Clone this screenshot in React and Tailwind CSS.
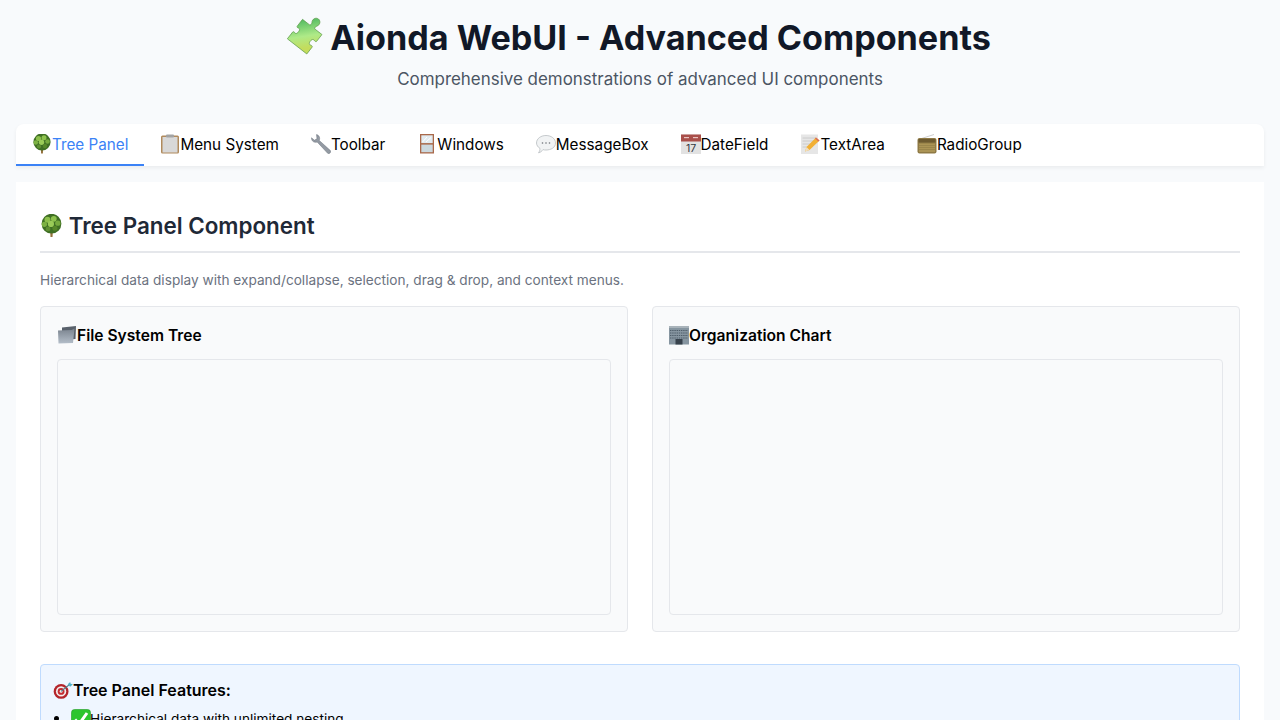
import React from 'react';

// Emoji drawings (no colour emoji font on the box)
const Puzzle = ({ className }) => (
  <svg className={className} viewBox="18 15 120 120">
    <defs>
      <linearGradient id="pz" x1="0.9" y1="0.2" x2="0.1" y2="0.8">
        <stop offset="0" stopColor="#4db85f" />
        <stop offset="0.6" stopColor="#aeea88" />
        <stop offset="1" stopColor="#c4dc5c" />
      </linearGradient>
    </defs>
    <path
      transform="translate(74 74) rotate(-52) scale(1.12)"
      d="M-33 -33 L-10 -33 C-7 -33 -7 -29 -8 -27 C-12 -19 12 -19 8 -27 C7 -29 7 -33 10 -33 L33 -33 L33 -10 C33 -6 38 -6 42 -8 C50 -14 60 -8 60 0 C60 8 50 14 42 8 C38 6 33 6 33 10 L33 33 L10 33 C7 33 7 29 8 26 C12 17 -12 17 -8 26 C-7 29 -7 33 -10 33 L-33 33 Z"
      fill="url(#pz)"
      stroke="#5d9a48"
      strokeWidth="1.8"
      strokeLinejoin="round"
    />
  </svg>
);

const Tree = ({ className }) => (
  <svg className={className} viewBox="0 0 20 20">
    <path d="M8.8 13 L11.2 13 L10.9 19.5 L9.1 19.5 Z" fill="#94713c" />
    <circle cx="10" cy="8" r="8.6" fill="#3f6f24" />
    <circle cx="6.5" cy="4.5" r="2.6" fill="#8dc04c" />
    <circle cx="12" cy="3.8" r="2.5" fill="#8ec24e" />
    <circle cx="3.8" cy="8.5" r="2.3" fill="#7db243" />
    <circle cx="9.5" cy="8.2" r="2.7" fill="#9acb58" />
    <circle cx="15.5" cy="7.5" r="2.3" fill="#76aa3e" />
    <circle cx="7" cy="12.5" r="2.1" fill="#5f9032" />
    <circle cx="13" cy="12" r="2.2" fill="#568729" />
  </svg>
);

const Clipboard = ({ className }) => (
  <svg className={className} viewBox="0 0 20 20">
    <rect x="1" y="1.5" width="18" height="18" rx="1.5" fill="#b08a5c" />
    <rect x="2.5" y="3" width="15" height="15.5" fill="#d8d8d8" />
    <rect x="6" y="0.5" width="8" height="3" rx="1" fill="#a3a3a3" />
  </svg>
);

const Wrench = ({ className }) => (
  <svg className={className} viewBox="0 0 20 20">
    <path
      d="M5.5 0.6 C8.3 1 9.3 4.3 8.2 6.4 L19.4 16.6 C20.4 18.2 18.4 20.4 16.7 19.3 L6.2 8 C3.6 9 0.4 7.4 0.5 3.8 L3.4 6.2 L6 4.8 Z"
      fill="#939aa3"
      stroke="#69717a"
      strokeWidth="0.5"
    />
  </svg>
);

const WindowPane = ({ className }) => (
  <svg className={className} viewBox="0 0 20 20">
    <rect x="3" y="0" width="14" height="19.5" fill="#a9694a" />
    <rect x="4.3" y="1.3" width="11.4" height="7.8" fill="#e2ebf0" />
    <rect x="4.3" y="10.6" width="11.4" height="7.6" fill="#cbd8de" />
    <path d="M5.5 8 L10 3 M9 8 L14 3.5" stroke="#ffffff" strokeWidth="1" />
  </svg>
);

const Speech = ({ className }) => (
  <svg className={className} viewBox="0 0 20 20">
    <path
      d="M10 1.5 C15 1.5 19.5 4.5 19.5 9 C19.5 13.5 15 16 10 16 C9 16 8 16 7 15.6 C6 17 4.5 18.5 2.5 18.8 C3.5 17.5 4 16 4 14.5 C1.8 13 0.5 11 0.5 9 C0.5 4.5 5 1.5 10 1.5 Z"
      fill="#f1f3f4"
      stroke="#b8bcc0"
      strokeWidth="0.8"
    />
    <circle cx="6.5" cy="9" r="0.8" fill="#6d7278" />
    <circle cx="10" cy="9" r="0.8" fill="#6d7278" />
    <circle cx="13.5" cy="9" r="0.8" fill="#6d7278" />
  </svg>
);

const Calendar = ({ className }) => (
  <svg className={className} viewBox="0 0 20 20">
    <rect x="0" y="0.5" width="20" height="19.5" fill="#e2e2e2" />
    <rect x="0" y="0.5" width="20" height="7" fill="#a94f4a" />
    <rect x="3" y="3" width="5" height="1.2" fill="#e9c4c1" />
    <rect x="12" y="3" width="5" height="1.2" fill="#e9c4c1" />
    <text x="10" y="18.2" textAnchor="middle" fontSize="10.5" fontFamily="Inter, sans-serif" fill="#33393f">
      17
    </text>
  </svg>
);

const Memo = ({ className }) => (
  <svg className={className} viewBox="0 0 20 20">
    <rect x="1" y="0.5" width="17" height="19.5" fill="#e6e6e6" />
    <path d="M2.5 4 H16 M2.5 7 H16 M2.5 10 H12 M2.5 13 H8" stroke="#c4c4c4" strokeWidth="0.8" />
    <path d="M5 17.5 L6.5 13 L16 3.5 L19.5 6.5 L9.5 16 Z" fill="#f2b035" />
    <path d="M15 4.5 L16 3.5 L19.5 6.5 L18.5 7.5 Z" fill="#d96a5f" />
    <path d="M5 17.5 L6.5 13 L9.5 16 Z" fill="#f1dfc0" />
  </svg>
);

const Radio = ({ className }) => (
  <svg className={className} viewBox="0 0 20 20">
    <path d="M3 5 L17 0.5" stroke="#b9b9b9" strokeWidth="0.7" />
    <rect x="0.5" y="4" width="19" height="15.5" rx="2" fill="#8f7a45" />
    <rect x="1.5" y="5" width="17" height="3.5" fill="#6d5a30" />
    <rect x="2" y="9.5" width="16" height="8.5" fill="#ab9455" />
    <path d="M2 11.5 H18 M2 13.5 H18 M2 15.5 H18" stroke="#8f7a45" strokeWidth="0.6" />
  </svg>
);

const Folder = ({ className }) => (
  <svg className={className} viewBox="0 0 20 20">
    <defs>
      <linearGradient id="fd" x1="0" y1="0" x2="0" y2="1">
        <stop offset="0" stopColor="#7a838e" />
        <stop offset="1" stopColor="#b4bec9" />
      </linearGradient>
    </defs>
    <path d="M5 2.5 L19 1 L18.5 14 L5 15 Z" fill="#59616b" />
    <path d="M1 5.5 L14.5 5 L17.5 3.5 L16 18 L1.5 18.5 Z" fill="url(#fd)" />
  </svg>
);

const Building = ({ className }) => (
  <svg className={className} viewBox="0 0 20 20">
    <rect x="0" y="2" width="20" height="17.5" fill="#8695a0" />
    <rect x="0" y="1" width="20" height="2" fill="#a9b3ba" />
    <path d="M1 5.5 H19 M1 8 H19 M1 10.5 H19 M1 13 H19" stroke="#4f5e6a" strokeWidth="1" strokeDasharray="1.4 0.8" />
    <rect x="6.5" y="14" width="7" height="5.5" fill="#37424c" />
  </svg>
);

const Target = ({ className }) => (
  <svg className={className} viewBox="0 0 21 20">
    <circle cx="8.5" cy="11.5" r="7.8" fill="#b3242a" />
    <circle cx="8.5" cy="11.5" r="5.4" fill="#f3eeee" />
    <circle cx="8.5" cy="11.5" r="3.6" fill="#c42c30" />
    <circle cx="8.5" cy="11.5" r="1.5" fill="#f3eeee" />
    <path d="M8.5 11.5 L17 4.5" stroke="#4d7f8e" strokeWidth="1.1" />
    <path d="M15.5 4 L18 1.5 L18.5 3.5 L21 4 L18 6.5 Z" fill="#4fb0c6" />
  </svg>
);

const Check = ({ className }) => (
  <svg className={className} viewBox="0 0 20 20">
    <rect x="0.5" y="0.5" width="19" height="19" rx="3" fill="#2cc52e" stroke="#1f9a22" strokeWidth="0.6" />
    <path d="M4 10.5 L8.2 15 L16 4" fill="none" stroke="#ffffff" strokeWidth="3" />
  </svg>
);

const emoji = 'inline-block align-[-4px] w-5 h-5';

const tabs = [
  { icon: Tree, label: 'Tree Panel', active: true },
  { icon: Clipboard, label: 'Menu System' },
  { icon: Wrench, label: 'Toolbar' },
  { icon: WindowPane, label: 'Windows' },
  { icon: Speech, label: 'MessageBox' },
  { icon: Calendar, label: 'DateField' },
  { icon: Memo, label: 'TextArea' },
  { icon: Radio, label: 'RadioGroup' },
];

const DemoBox = ({ icon: Icon, title }) => (
  <div className="bg-[#f9fafb] border border-[#e5e7eb] rounded p-4 h-[326px] flex flex-col">
    <h3 className="text-[15.6px] font-semibold leading-[26px] text-black mb-[10px] whitespace-nowrap">
      <Icon className={emoji} />
      {title}
    </h3>
    <div className="flex-1 border border-[#e5e7eb] rounded bg-[#f9fafb]"></div>
  </div>
);

export default function App() {
  return (
    <div className="h-screen overflow-hidden bg-[#f8fafc] p-4 font-['Inter',sans-serif] text-black">
      <header className="text-center mb-[33px]">
        <h1 className="text-[34.15px] font-bold text-[#111827] leading-[44px] whitespace-nowrap">
          <Puzzle className="inline-block align-[-7px] w-10 h-10 -ml-[3px] -mr-[4px]" /> Aionda WebUI - Advanced Components
        </h1>
        <p className="text-[16.96px] text-[#4b5563] leading-6 mt-[7px]">
          Comprehensive demonstrations of advanced UI components
        </p>
      </header>

      <nav className="flex bg-white rounded-t-lg shadow-[0_2px_4px_rgba(0,0,0,0.06)] mb-4 h-[42px] overflow-hidden">
        {tabs.map(({ icon: Icon, label, active }) => (
          <button
            key={label}
            className={`px-4 pt-[2px] h-[42px] text-[15.25px] leading-6 whitespace-nowrap border-b-2 ${
              active ? 'text-[#3b82f6] border-[#3b82f6]' : 'text-black border-transparent'
            }`}
          >
            <Icon className={emoji} />
            {label}
          </button>
        ))}
      </nav>

      <main className="bg-white rounded-b-lg p-6">
        <h2 className="text-[22.4px] font-semibold text-[#1f2937] leading-[40px] pb-[5px] border-b-2 border-[#e5e7eb] mb-[19px] whitespace-nowrap">
          <Tree className="inline-block align-[-4px] w-[23px] h-6" /> Tree Panel Component
        </h2>
        <p className="text-[13.65px] text-[#6b7280] leading-[17px] mb-[17px]">
          Hierarchical data display with expand/collapse, selection, drag &amp; drop, and context menus.
        </p>
        <div className="grid grid-cols-2 gap-6 mb-8">
          <DemoBox icon={Folder} title="File System Tree" />
          <DemoBox icon={Building} title="Organization Chart" />
        </div>
        <div className="bg-[#eff6ff] border border-[#bfdbfe] rounded px-3 pt-[13px] pb-3">
          <h4 className="text-base font-semibold leading-6 mb-[6px] whitespace-nowrap">
            <Target className="inline-block align-[-4px] w-5 h-5" />
            Tree Panel Features:
          </h4>
          <ul className="text-[13.65px] leading-5">
            <li className="flex items-center">
              <span className="w-[5px] h-[5px] rounded-full bg-black ml-[1px] mr-[12px]"></span>
              <Check className="w-5 h-5 -mr-[1px] mt-[1px] shrink-0" />
              <span>Hierarchical data with unlimited nesting</span>
            </li>
          </ul>
        </div>
      </main>
    </div>
  );
}
